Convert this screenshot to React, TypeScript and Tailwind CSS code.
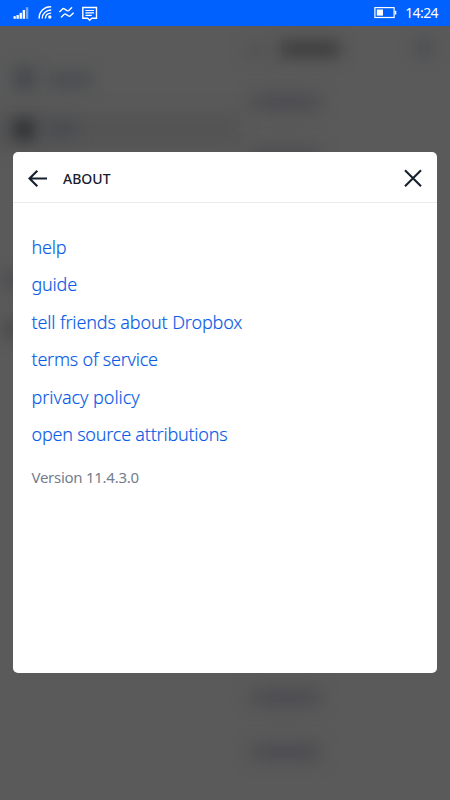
import React from 'react';

const links = [
  { label: 'help', tracking: 'tracking-[-0.2px]' },
  { label: 'guide', tracking: 'tracking-[-0.2px]' },
  { label: 'tell friends about Dropbox', tracking: 'tracking-[-0.13px]' },
  { label: 'terms of service', tracking: 'tracking-[-0.22px]' },
  { label: 'privacy policy', tracking: 'tracking-[-0.03px]' },
  { label: 'open source attributions', tracking: 'tracking-[-0.22px]' },
];

// Shapes of the dimmed, out-of-focus page behind the dialog.
const smudges = [
  'left-[14px] top-[67px] w-[21px] h-[23px] bg-[#45484c] blur-[8px]',
  'left-[48px] top-[73px] w-[44px] h-[14px] bg-[#494b4f] blur-[8px]',
  'left-[14px] top-[119px] w-[20px] h-[21px] bg-[#2c2f31] blur-[8px]',
  'left-[48px] top-[122px] w-[28px] h-[14px] bg-[#474a4d] blur-[8px]',
  'left-[280px] top-[41px] w-[60px] h-[16px] bg-[#3c3c3c] blur-[8px]',
  'left-[246px] top-[44px] w-[20px] h-[12px] bg-[#515152] blur-[8px]',
  'left-[417px] top-[39px] w-[14px] h-[18px] bg-[#4b4d52] blur-[8px]',
  'left-[252px] top-[95px] w-[68px] h-[14px] bg-[#49494f] blur-[9px]',
  'left-[252px] top-[149px] w-[68px] h-[13px] bg-[#49494f] blur-[9px]',
  'left-[252px] top-[691px] w-[68px] h-[14px] bg-[#49494f] blur-[9px]',
  'left-[252px] top-[745px] w-[68px] h-[14px] bg-[#49494f] blur-[9px]',
  'left-[4px] top-[272px] w-[18px] h-[16px] bg-[#49494e] blur-[8px]',
  'left-[4px] top-[321px] w-[18px] h-[16px] bg-[#464649] blur-[8px]',
];

function StatusBar() {
  return (
    <header className="relative flex h-[25.5px] items-start justify-between bg-[#0061fe] text-white">
      <svg width="110" height="25" viewBox="0 0 110 25" fill="none" stroke="currentColor" strokeWidth="1.2">
        <g fill="currentColor" stroke="none">
          <rect x="13.5" y="16.2" width="2.3" height="2.6" />
          <rect x="16.5" y="15" width="2.3" height="3.8" />
          <rect x="19.6" y="12.8" width="2.3" height="6" />
          <rect x="22.7" y="10" width="2.3" height="8.8" />
          <rect x="25.8" y="7.2" width="2.5" height="11.6" opacity="0.45" />
        </g>
        <path d="M39.2 18.6C38.8 11.8 44.2 6.6 51.2 6.8M42.2 18.6C42.1 13.5 46 10 51.2 10M45.4 18.6C45.4 15.2 47.8 13.1 51.2 13.1" strokeWidth="1.4" />
        <circle cx="49.8" cy="17" r="1.7" fill="currentColor" stroke="none" />
        <path d="M59.4 12L62.6 8.9Q63.4 8.2 64.4 8.9L67 10.6Q68 11.2 68.9 10.4L72 7.3M61 17.4L64.2 14.3Q65 13.6 66 14.3L68.6 16Q69.6 16.6 70.5 15.8L73.6 12.7" strokeWidth="1.4" />
        <path d="M82.8 7.5H96.5V18.3H91.8L89.7 20.2L87.6 18.3H82.8Z" strokeWidth="1.4" />
        <path d="M85.4 10.5H94M85.4 12.9H94M85.4 15.3H91.8" />
      </svg>
      <div className="flex items-start">
        <svg className="mt-[6px]" width="24" height="14" viewBox="0 0 24 14" fill="none">
          <rect x="0.9" y="1.6" width="19.2" height="9.9" stroke="currentColor" strokeWidth="1.2" />
          <rect x="2.8" y="3.5" width="6.2" height="6.1" fill="currentColor" />
          <rect x="20.8" y="4.8" width="1.5" height="3.7" fill="currentColor" />
        </svg>
        <time className="ml-[7.5px] mr-[12px] whitespace-nowrap text-[14px] leading-[26px] tracking-[-0.6px]">14:24</time>
      </div>
    </header>
  );
}

export default function App() {
  return (
    <div className="relative flex h-[800px] w-[450px] flex-col overflow-hidden bg-[#5a5a5a] font-['Noto_Sans','Open_Sans',sans-serif]">
      <div className="absolute inset-0" aria-hidden="true">
        <div className="absolute left-[-10px] top-[112px] h-[36px] w-[250px] bg-[#545455] blur-[8px]" />
        {smudges.map((shape) => (
          <div key={shape} className={`absolute ${shape}`} />
        ))}
      </div>
      <StatusBar />
      <main className="relative mx-[13px] mt-[126.5px] h-[520.5px] rounded-[5px] bg-white">
        <div className="flex h-[51px] items-center border-b border-[#ebebeb] pl-[15px] pr-[15px] text-[#17202e]">
          <button aria-label="Back" className="flex">
            <svg width="20" height="21" viewBox="0 0 20 21" fill="none" stroke="currentColor" strokeWidth="2.2">
              <path d="M19 11.5H1.8M9.3 3.7L1.5 11.5L9.3 19.3" />
            </svg>
          </button>
          <h1 className="ml-[15px] mt-[3px] whitespace-nowrap text-[14px] font-medium leading-5 tracking-[0px]">ABOUT</h1>
          <button aria-label="Close" className="ml-auto flex">
            <svg width="18" height="19" viewBox="0 0 18 19" fill="none" stroke="currentColor" strokeWidth="2.1">
              <path d="M1 2.2L17 18.2M17 2.2L1 18.2" />
            </svg>
          </button>
        </div>
        <nav className="flex flex-col items-start pl-[18.5px] pt-[25.5px]">
          {links.map(({ label, tracking }) => (
            <a key={label} className={`h-[37.5px] whitespace-nowrap text-[18px] font-light leading-[37.5px] text-[#0a5ce6] [-webkit-text-stroke:0.15px_#0a5ce6] ${tracking}`}>
              {label}
            </a>
          ))}
        </nav>
        <p className="mt-[11px] whitespace-nowrap pl-[18.5px] text-[15px] leading-[24px] tracking-[-0.27px] text-[#727d8d]">Version 11.4.3.0</p>
      </main>
    </div>
  );
}
